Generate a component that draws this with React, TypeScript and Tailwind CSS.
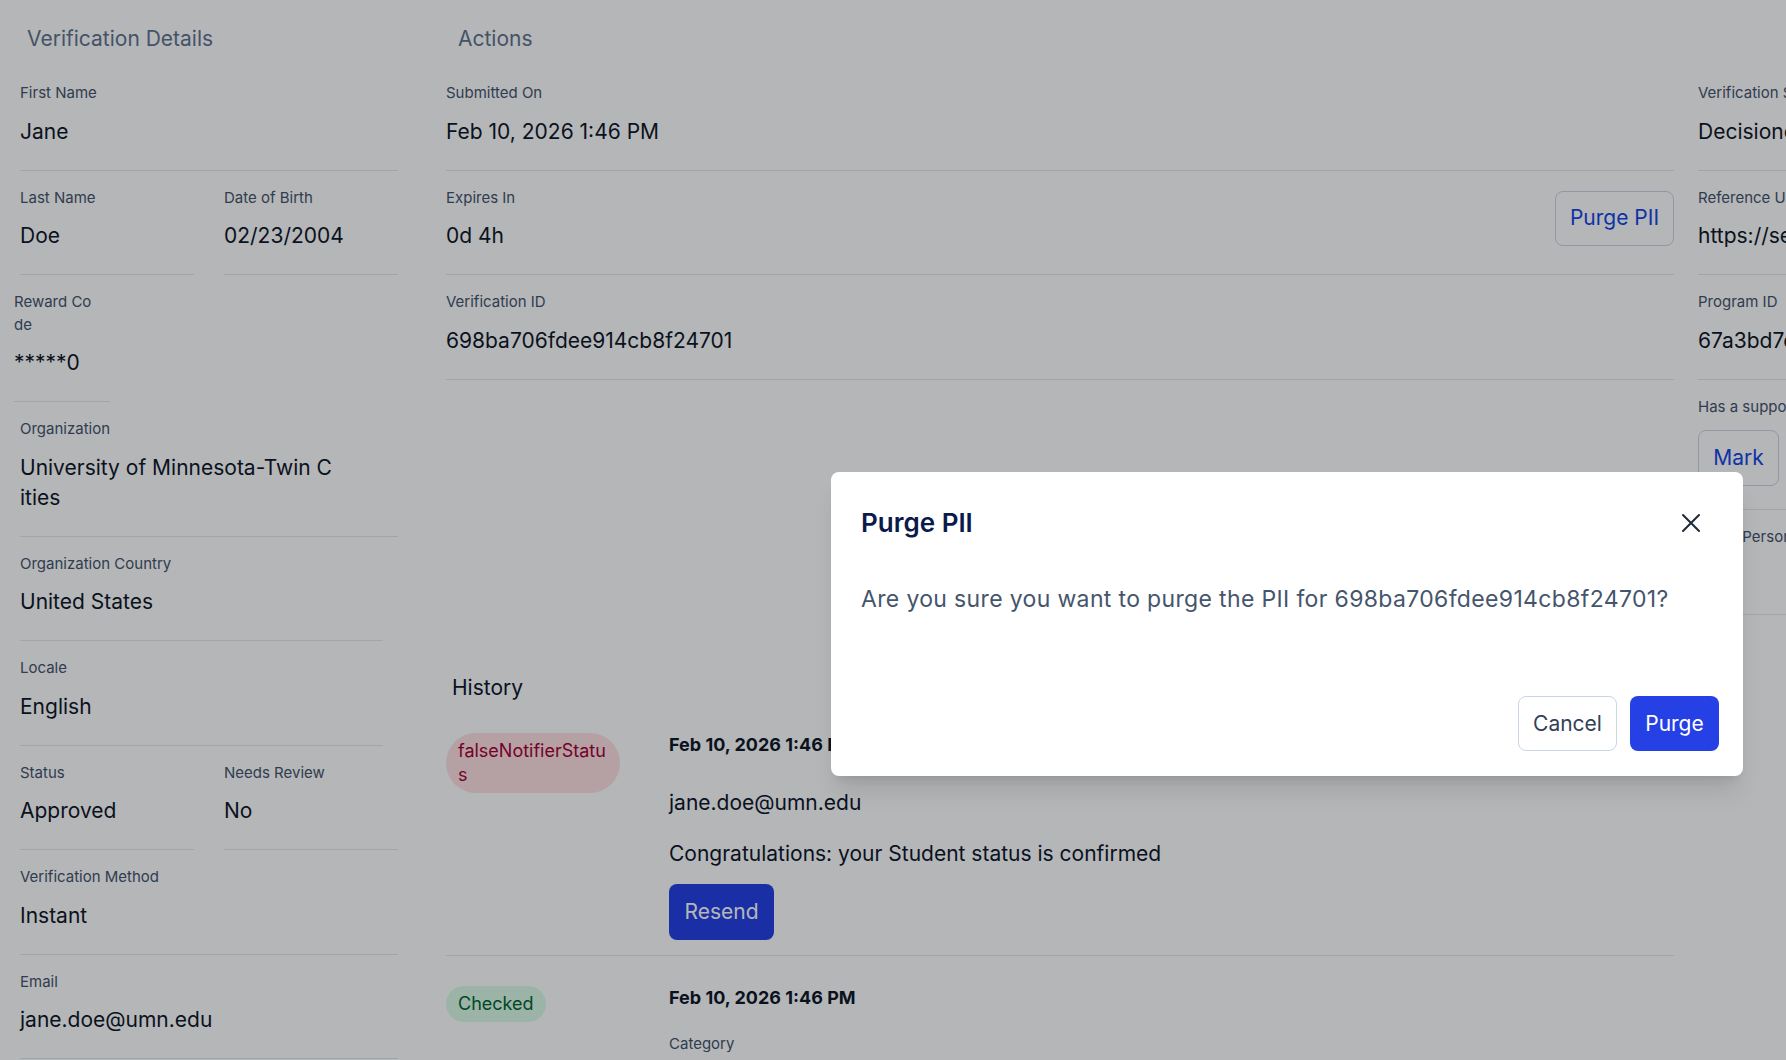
import React from 'react'

const font = { fontFamily: 'Inter, "Noto Sans", sans-serif' }

type FieldProps = {
  label: string
  value?: React.ReactNode
  className?: string
  labelClass?: string
  children?: React.ReactNode
}

const Field = ({ label, value, className = '', labelClass = '', children }: FieldProps) => {
  return (
    <div className={`border-b border-gray-200 pt-[16px] pb-[23px] ${className}`}>
      <div className={`text-[15px] leading-[22.5px] text-slate-600 ${labelClass}`}>{label}</div>
      {children ? children : <div className="mt-[12px] whitespace-nowrap text-[21px] leading-[30px] text-gray-900">{value}</div>}
    </div>
  )
}

const LeftColumn = () => {
  return (
    <div className="w-[398px] shrink-0 pl-[14px]">
      <h2 className="h-[66px] pl-[13px] pt-[24px] text-[21px] leading-[30px] text-slate-500">Verification Details</h2>
      <Field label="First Name" value="Jane" className="ml-[6px]" />
      <div className="ml-[6px] grid grid-cols-2 gap-x-[30px]">
        <Field label="Last Name" value="Doe" />
        <Field label="Date of Birth" value="02/23/2004" />
      </div>
      <Field label="Reward Code" value="*****0" className="w-[96px]" labelClass="w-[86px] break-all" />
      <Field label="Organization" className="ml-[6px]">
        <div className="mt-[12px] w-[314px] break-all text-[21px] leading-[30px] text-gray-900">University of Minnesota-Twin Cities</div>
      </Field>
      <Field label="Organization Country" value="United States" className="ml-[6px] mr-[15px]" />
      <Field label="Locale" value="English" className="ml-[6px] mr-[15px]" />
      <div className="ml-[6px] grid grid-cols-2 gap-x-[30px]">
        <Field label="Status" value="Approved" />
        <Field label="Needs Review" value="No" />
      </div>
      <Field label="Verification Method" value="Instant" className="ml-[6px]" />
      <Field label="Email" value="jane.doe@umn.edu" className="ml-[6px]" />
    </div>
  )
}

const History = () => {
  return (
    <div className="mt-[293px]">
      <h3 className="pl-[6px] text-[21px] leading-[30px] text-slate-900">History</h3>
      <div className="mt-[30px] flex border-b border-gray-200 pb-[15px]">
        <div className="w-[223px] shrink-0">
          <span className="block w-[174px] break-all rounded-[30px] bg-red-100 px-[12px] py-[6px] text-[18px] leading-[24px] text-rose-800">
            falseNotifierStatus
          </span>
        </div>
        <div className="flex flex-col items-start">
          <div className="text-[18px] font-bold leading-[24px] text-gray-900">Feb 10, 2026 1:46 PM</div>
          <div className="mt-[31px] text-[21px] leading-[30px] text-slate-900">jane.doe@umn.edu</div>
          <div className="mt-[21px] text-[21px] leading-[30px] text-slate-900">Congratulations: your Student status is confirmed</div>
          <button className="mt-[15px] h-[56px] w-[105px] rounded-[8px] bg-[#2541e6] text-[21px] text-white">Resend</button>
        </div>
      </div>
      <div className="flex pt-[30px]">
        <div className="w-[223px] shrink-0">
          <span className="inline-block rounded-[20px] bg-green-100 px-[12px] py-[6px] text-[18px] leading-[24px] text-green-800">
            Checked
          </span>
        </div>
        <div className="flex flex-col items-start">
          <div className="text-[18px] font-bold leading-[24px] text-gray-900">Feb 10, 2026 1:46 PM</div>
          <div className="mt-[23px] text-[15px] leading-[22px] text-slate-600">Category</div>
        </div>
      </div>
    </div>
  )
}

const MiddleColumn = () => {
  return (
    <div className="ml-[48px] w-[1228px] shrink-0">
      <h2 className="h-[66px] pl-[12px] pt-[24px] text-[21px] leading-[30px] text-slate-500">Actions</h2>
      <Field label="Submitted On" value="Feb 10, 2026 1:46 PM" />
      <div className="flex items-start justify-between border-b border-gray-200">
        <Field label="Expires In" value="0d 4h" className="border-b-0" />
        <button className="mt-[20px] h-[55px] w-[119px] rounded-[8px] border border-slate-300 text-[21px] text-blue-700">Purge PII</button>
      </div>
      <Field label="Verification ID" value="698ba706fdee914cb8f24701" />
      <History />
    </div>
  )
}

const RightColumn = () => {
  return (
    <div className="ml-[24px] w-[420px] shrink-0">
      <div className="h-[66px]" />
      <Field label="Verification Status" value="Decisioned" />
      <Field label="Reference URL" value="https://services.sheerid.com/verify/67a3bd7" />
      <Field label="Program ID" value="67a3bd7c1f0a2e4b9d8c3f21" />
      <Field label="Has a supporting document?">
        <button className="mt-[12px] h-[56px] w-[81px] rounded-[8px] border border-slate-300 text-[21px] text-blue-700">Mark</button>
      </Field>
      <Field label="Has a Personal Email" value="Yes" />
    </div>
  )
}

const PurgeDialog = () => {
  return (
    <div className="absolute left-[831px] top-[472px] flex h-[304px] w-[912px] flex-col rounded-[8px] bg-white shadow-xl">
      <div className="flex items-center justify-between pl-[30px] pr-[42px] pt-[35px]">
        <h2 className="text-[26px] font-semibold leading-[32px] text-[#0c1a4b]">Purge PII</h2>
        <svg width="20" height="20" viewBox="0 0 20 20" fill="none" stroke="#1f2937" strokeWidth="2" strokeLinecap="round">
          <path d="M2 2 L18 18 M18 2 L2 18" />
        </svg>
      </div>
      <p className="mt-[45px] px-[30px] text-[23px] leading-[30px] tracking-[0.015em] text-slate-600">
        Are you sure you want to purge the PII for 698ba706fdee914cb8f24701?
      </p>
      <div className="mt-auto flex justify-end gap-[13px] px-[24px] pb-[25px]">
        <button className="h-[55px] w-[99px] rounded-[8px] border border-slate-300 bg-white text-[21px] text-slate-700">Cancel</button>
        <button className="h-[55px] w-[89px] rounded-[8px] bg-[#2541e6] text-[21px] text-white">Purge</button>
      </div>
    </div>
  )
}

export default function App() {
  return (
    <div className="relative h-[1060px] w-[1786px] overflow-hidden bg-white" style={font}>
      <div className="flex">
        <LeftColumn />
        <MiddleColumn />
        <RightColumn />
      </div>
      <div className="absolute inset-0 bg-[rgba(0,2,12,0.29)]" />
      <PurgeDialog />
    </div>
  )
}
